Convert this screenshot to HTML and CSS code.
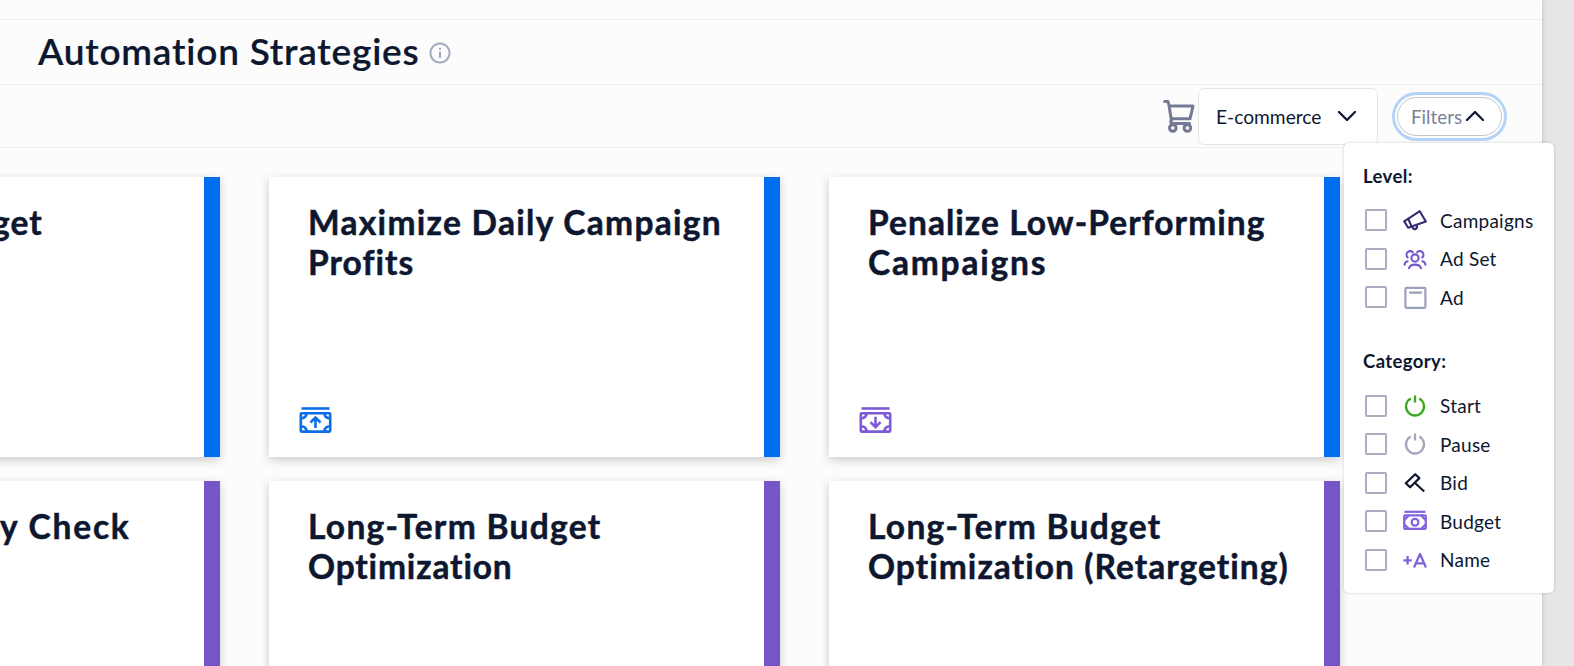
FILE: index.html
```html
<!DOCTYPE html>
<html lang="en">
<head>
    <meta charset="UTF-8">
    <title>Automation Strategies</title>
    <link rel="stylesheet" href="styles.css">
</head>
<body>
    <div class="page">
        <div class="top-strip"></div>
        <header class="page-header">
            <h1>Automation Strategies</h1>
            <svg class="info-icon" viewBox="0 0 22 22" fill="none" stroke="#a5aabd" stroke-width="2">
                <circle cx="11" cy="11" r="9.6"/>
                <path d="M11 9.5v6.5M11 5.8v2"/>
            </svg>
        </header>

        <div class="toolbar">
            <svg class="cart-icon" viewBox="0 0 32 34" fill="none" stroke="#747a93" stroke-width="3" stroke-linecap="round" stroke-linejoin="round">
                <path d="M1.6 2.5h3.4l1 3.7 2.4 15.3M6 7h24l-3 12.8H8.2"/>
                <path d="M8.4 21c-1.2 1.2-1 3.6 1 3.6H26.5"/>
                <circle cx="9.8" cy="29" r="3.3"/>
                <circle cx="24.4" cy="29" r="3.3"/>
            </svg>
            <div class="select">
                <span class="select-text">E-commerce</span>
                <svg class="chevron" viewBox="0 0 18 10"><path d="M1 1l8 8 8-8"/></svg>
            </div>
            <div class="filter-wrap">
                <button class="filter-btn">
                    <span class="filter-text">Filters</span>
                    <svg class="chevron" viewBox="0 0 18 10"><path d="M1 9l8-8 8 8"/></svg>
                </button>

                <div class="filter-menu">
                    <h3>Level:</h3>
                    <label class="option">
                        <span class="box"></span>
                        <svg class="icon" viewBox="0 0 24 24" fill="none" stroke="#3a2a73" stroke-width="2.1" stroke-linejoin="round" stroke-linecap="round">
                            <path d="M1.2 13.4L16.8 3.2l6 10.4-17.6 6.2z"/>
                            <path d="M5.2 10.8l3.4 7.6M9.4 18.7c.4 2 1.8 2.8 3.2 2.3 1.3-.5 1.7-1.800 1.100-3.800"/>
                        </svg>
                        <span class="name">Campaigns</span>
                    </label>
                    <label class="option">
                        <span class="box"></span>
                        <svg class="icon" viewBox="0 0 24 24" fill="none" stroke="#7357cd" stroke-width="2.1" stroke-linecap="round">
                            <circle cx="12" cy="11" r="3.6"/>
                            <path d="M6 21.2c.8-2.6 3.2-3.6 6-3.6s5.2 1 6 3.6"/>
                            <path d="M4.600 10.400A3.600 3.600 0 1 1 9.800 5.200M19.400 10.400A3.600 3.600 0 1 0 14.200 5.200"/>
                            <path d="M1.6 17.6c.2-1.8 1.3-3 3-3.4M22.4 17.6c-.2-1.8-1.3-3-3-3.4"/>
                        </svg>
                        <span class="name">Ad Set</span>
                    </label>
                    <label class="option">
                        <span class="box"></span>
                        <svg class="icon" viewBox="0 0 24 24" fill="none" stroke="#9ba1b8" stroke-width="2.2" stroke-linecap="round">
                            <rect x="2.4" y="2.8" width="20" height="20" rx="1"/>
                            <path d="M7 7.6h11"/>
                        </svg>
                        <span class="name">Ad</span>
                    </label>

                    <h3 class="category">Category:</h3>
                    <label class="option">
                        <span class="box"></span>
                        <svg class="icon" viewBox="0 0 24 24" fill="none" stroke="#3ba822" stroke-width="2.3">
                            <path d="M7.7 4.6a9 9 0 1 0 8.6 0M12 1.4v7"/>
                        </svg>
                        <span class="name">Start</span>
                    </label>
                    <label class="option">
                        <span class="box"></span>
                        <svg class="icon" viewBox="0 0 24 24" fill="none" stroke="#a5a8bb" stroke-width="2.3">
                            <path d="M7.7 4.6a9 9 0 1 0 8.6 0M12 1.4v7"/>
                        </svg>
                        <span class="name">Pause</span>
                    </label>
                    <label class="option">
                        <span class="box"></span>
                        <svg class="icon" viewBox="0 0 24 24" fill="none" stroke="#0f1830" stroke-width="2.2" stroke-linejoin="round">
                            <path d="M2.8 12.2L12.2 3.2l4.2 3.9-9.3 9.2z"/>
                            <path d="M11.5 11.5l9.7 9"/>
                        </svg>
                        <span class="name">Bid</span>
                    </label>
                    <label class="option">
                        <span class="box"></span>
                        <svg class="icon" viewBox="0 0 24 24" fill="none" stroke="#8262dc" stroke-width="2.2">
                            <path d="M1.5 2.8h21"/>
                            <rect x="1.2" y="6.3" width="21.6" height="13.6" rx="1"/>
                            <circle cx="12" cy="13.2" r="3.4"/>
                            <path d="M1.4 11l4.6-4.7M22.6 11L18 6.3M1.4 15.4L6 20.1M22.6 15.4L18 20.1"/>
                        </svg>
                        <span class="name">Budget</span>
                    </label>
                    <label class="option">
                        <span class="box"></span>
                        <svg class="icon" viewBox="0 0 24 24" fill="none" stroke="#8262dc" stroke-width="2.3" stroke-linejoin="round">
                            <path d="M.4 12.3h8.4M4.6 8.1v8.4M11 19.5l6-13.5 6 13.500M13 15.3h8"/>
                        </svg>
                        <span class="name">Name</span>
                    </label>
                </div>
            </div>
        </div>

        <main class="cards">
            <div class="card cut">
                <h2 class="get">get</h2>
            </div>
            <div class="card">
                <h2><span class="wide">Maximize Daily Campaign</span><br>Profits</h2>
                <svg class="money" viewBox="0 0 32 26" fill="none" stroke="#0d6ee8" stroke-width="2.6">
                    <path d="M2 1.5h28"/>
                    <rect x="1.3" y="6.2" width="29.4" height="18.4" rx="1"/>
                    <path d="M1.2 11.5q5.500 0 6-5.300M30.800 11.500q-5.500 0-6-5.300M1.200 19.300q5.500 0 6 5.300M30.800 19.300q-5.500 0-6 5.300"/>
                    <path d="M16 20.9v-10M11 15.5L16 10.5l5 5"/>
                </svg>
            </div>
            <div class="card">
                <h2>Penalize Low-Performing<br><span class="wider">Campaigns</span></h2>
                <svg class="money" viewBox="0 0 32 26" fill="none" stroke="#7d59d6" stroke-width="2.6">
                    <path d="M2 1.5h28"/>
                    <rect x="1.3" y="6.2" width="29.4" height="18.4" rx="1"/>
                    <path d="M1.2 11.5q5.500 0 6-5.300M30.800 11.500q-5.500 0-6-5.300M1.200 19.300q5.500 0 6 5.300M30.800 19.300q-5.500 0-6 5.300"/>
                    <path d="M16 9.7v10M11 15.1L16 20.1l5-5"/>
                </svg>
            </div>
            <div class="card cut purple">
                <h2 class="wider">y Check</h2>
            </div>
            <div class="card purple">
                <h2><span class="wide">Long-Term Budget</span><br><span class="tight">Optimization</span></h2>
            </div>
            <div class="card purple">
                <h2><span class="wide">Long-Term Budget</span><br>Optimization (Retargeting)</h2>
            </div>
        </main>
    </div>
</body>
</html>
```
FILE: styles.css
```css
* {
    box-sizing: border-box;
}

body {
    margin: 0;
    height: 666px;
    overflow: hidden;
    background: #e6e6e6;
    font-family: Lato, sans-serif;
    font-variant-ligatures: none;
    color: #0e1730;
}

.page {
    width: 1542px;
    height: 666px;
    background: #fcfcfc;
    box-shadow: 0 0 5px rgba(0, 0, 0, 0.18);
}

.top-strip {
    height: 20px;
    border-bottom: 1px solid #efeff0;
}

.page-header {
    display: flex;
    align-items: center;
    gap: 10px;
    height: 65px;
    padding-left: 38px;
    border-bottom: 1px solid #efeff0;
}

h1 {
    margin: 0;
    padding-bottom: 4px;
    font-size: 37px;
    font-weight: 600;
    letter-spacing: 0.78px;
    white-space: nowrap;
    -webkit-text-stroke: 0.2px #0e1730;
}

.info-icon {
    width: 22px;
    height: 22px;
    margin-top: 1px;
}

.toolbar {
    display: flex;
    align-items: center;
    justify-content: flex-end;
    height: 63px;
    padding-right: 40px;
    border-bottom: 1px solid #efeff0;
}

.cart-icon {
    width: 32px;
    height: 34px;
    margin-right: 3px;
}

.select {
    display: flex;
    align-items: center;
    justify-content: space-between;
    width: 180px;
    height: 57px;
    padding: 0 21px 0 17px;
    background: #fff;
    border: 1px solid #e7e7ea;
    border-radius: 6px;
    font-size: 19.2px;
}

.chevron {
    width: 18px;
    height: 10px;
    overflow: visible;
    fill: none;
    stroke: #0e1730;
    stroke-width: 2.3;
    stroke-linecap: round;
    stroke-linejoin: round;
}

.filter-wrap {
    position: relative;
    margin-left: 19px;
}

.filter-btn {
    display: flex;
    align-items: center;
    justify-content: space-between;
    width: 105px;
    height: 39px;
    padding: 0 17px 0 13px;
    background: #fff;
    border: 1px solid #c3c4c9;
    border-radius: 20px;
    box-shadow: 0 0 0 2px #fff, 0 0 0 5px #b3d3f8;
    color: #7b8096;
    font-family: inherit;
    font-size: 18.8px;
}

/* dropdown */
.filter-menu {
    position: absolute;
    top: 46px;
    right: -52px;
    z-index: 2;
    width: 210px;
    height: 450px;
    padding: 19px 0 0 19px;
    background: #fff;
    border-radius: 5px;
    box-shadow: 0 0 3px rgba(0, 0, 0, 0.2);
}

h3 {
    margin: 0;
    height: 39.5px;
    font-size: 18.5px;
    line-height: 28px;
    font-weight: 700;
    letter-spacing: 0.4px;
}

.category {
    margin-top: 30.5px;
}

.option {
    display: flex;
    align-items: center;
    height: 38.5px;
    padding-left: 2px;
    font-size: 19px;
    letter-spacing: 0.25px;
}

.box {
    width: 22px;
    height: 22px;
    border: 2px solid #a9aec2;
    border-radius: 2px;
}

.icon {
    width: 24px;
    height: 24px;
    margin: 0 13.5px 0 15.5px;
}

/* strategy cards */
.cards {
    display: grid;
    grid-template-columns: 220px 511px 511px;
    grid-auto-rows: 280px;
    gap: 24px 49px;
    padding-top: 29px;
    height: 518px;
    overflow: hidden;
}

.card {
    display: flex;
    flex-direction: column;
    justify-content: space-between;
    padding: 25px 0 24px 39px;
    background: #fff;
    border-right: 16px solid #006ef0;
    box-shadow: 0 3px 9px rgba(0, 0, 0, 0.2);
}

/* first column runs off the left side */
.cut {
    margin-left: -20px;
    padding-left: 20px;
}

.purple {
    border-color: #7655c6;
}

h2 {
    margin: 0;
    font-size: 33.5px;
    line-height: 40px;
    font-weight: 700;
    letter-spacing: 1.05px;
    white-space: nowrap;
    -webkit-text-stroke: 0.5px #0e1730;
}

.wide {
    letter-spacing: 1.3px;
}

.wider {
    letter-spacing: 1.8px;
}

.tight {
    letter-spacing: 0.85px;
}

.get {
    margin-left: -8px;
}

.money {
    width: 33px;
    height: 26px;
    margin-left: -9px;
}
```
